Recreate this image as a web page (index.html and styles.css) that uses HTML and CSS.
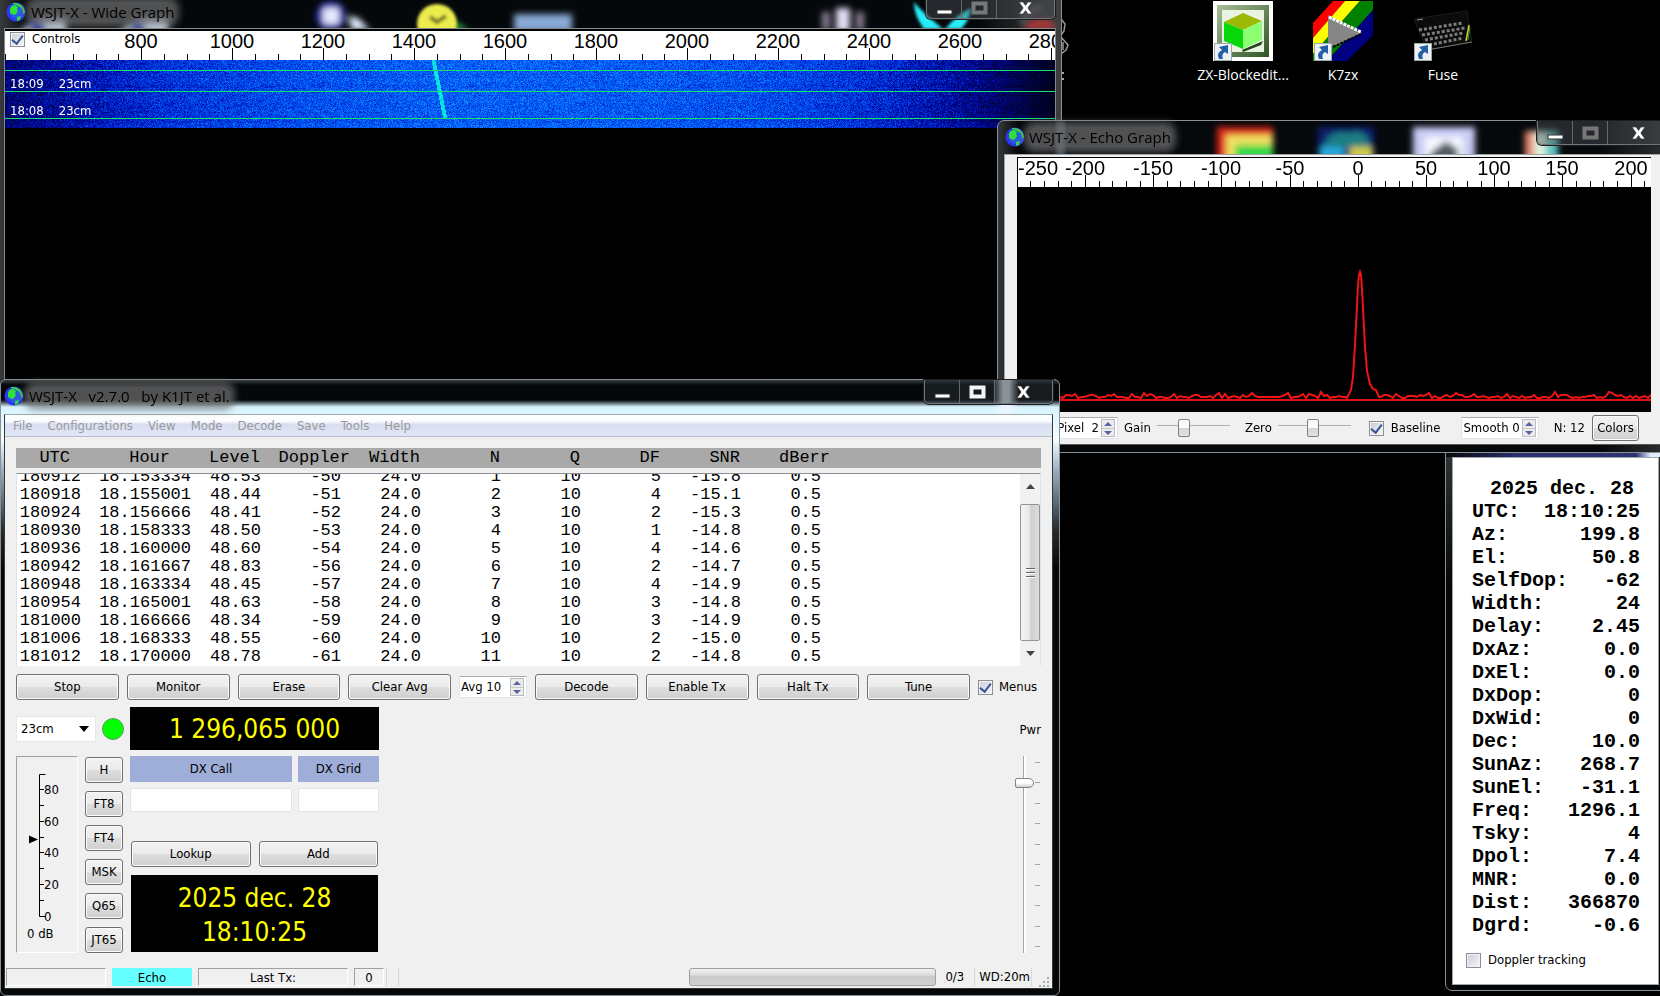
FILE: index.html
```
<!DOCTYPE html>
<html lang="en">
<head>
<meta charset="utf-8">
<title>WSJT-X v2.7.0</title>
<link rel="stylesheet" href="styles.css">
</head>
<body>
<svg class="defs" aria-hidden="true">
  <defs>
    <filter id="soft" x="-20%" y="-50%" width="140%" height="200%"><feGaussianBlur stdDeviation="3"/></filter>
    <filter id="softer" x="-20%" y="-50%" width="140%" height="200%"><feGaussianBlur stdDeviation="1.500"/></filter>
    <symbol id="globe" viewBox="0 0 20 20">
      <circle cx="10" cy="10" r="9.5" fill="#2f35f0"/>
      <circle cx="11" cy="10" r="7" fill="#2a5ae6"/>
      <path d="M4 7Q5 3 9 3L12 5L11 7L12 9L10 12L8 13L4 11Z" fill="#2de336"/>
      <path d="M7 1Q17 0 19 10L17.500 12Q17 4 7 2ZM11 15L15 14L14 18L11 19Z" fill="#35dd3b"/>
    </symbol>
    <symbol id="min" viewBox="0 0 17 14"><rect x="1" y="9" width="15" height="4" fill="#fff" stroke="#333" stroke-width="1"/></symbol>
    <symbol id="max" viewBox="0 0 17 14"><rect x="2.5" y="2.5" width="12" height="9" fill="none" stroke="currentColor" stroke-width="4"/></symbol>
    <symbol id="close" viewBox="0 0 17 14"><path d="M2 1H6L8.500 4.500L11 1H15L10.800 7L15 13H11L8.500 9.500L6 13H2L6.200 7Z" fill="#fff" stroke="#333" stroke-width=".6"/></symbol>
    <symbol id="shortcut" viewBox="0 0 18 18">
      <rect x=".5" y=".5" width="17" height="17" fill="#eef1f5" stroke="#9aa"/>
      <path d="M5 16Q2 10 8 7L5 4L14 2L14 11L11 9Q7 11 9 16Z" fill="#255fa8"/>
    </symbol>
  </defs>
</svg>

<main class="desktop">
  <div class="shortcuts">
    <a class="shortcut" href="#zx">
      <svg width="60" height="60" viewBox="0 0 60 60">
        <defs><linearGradient id="frame" x2="1" y2="1"><stop stop-color="#a9bf98"/><stop offset="1" stop-color="#2e5522"/></linearGradient></defs>
        <rect width="60" height="60" fill="#fff"/><rect x="4" y="4" width="52" height="52" fill="url(#frame)"/>
        <rect x="9" y="9" width="42" height="42" fill="#e9f3e2"/>
        <path d="M29 49L50 40L48 44L30 51Z" fill="#24401c"/>
        <path d="M11 21L30 12L49 20L30 29Z" fill="#9db805"/><path d="M11 21L30 29V48L11 40Z" fill="#08d70c"/><path d="M49 20L30 29V48L49 39Z" fill="#8dff72"/>
        <use href="#shortcut" x="1" y="42" width="18" height="18"/>
      </svg>
      <span>ZX-Blockedit...</span>
    </a>
    <a class="shortcut" href="#k7zx">
      <svg width="60" height="60" viewBox="0 0 60 60">
        <path d="M0 22L20 0H32L0 37Z" fill="#f00"/><path d="M32 0H47L0 53V37Z" fill="#ff0"/><path d="M47 0H60V9L14 60H0V53Z" fill="#008000"/><path d="M60 9V34L34 60H14Z" fill="#000080"/>
        <path d="M15 14L49 32L15 48Z" fill="#858585"/><path d="M16 16L48 31" stroke="#fff" stroke-width="3" stroke-dasharray="3 1"/><path d="M20 46L48 33" stroke="#000" stroke-width="2" stroke-dasharray="3 1"/>
        <use href="#shortcut" x="1" y="42" width="18" height="18"/>
      </svg>
      <span>K7zx</span>
    </a>
    <a class="shortcut" href="#fuse">
      <svg width="60" height="60" viewBox="0 0 60 60">
        <path d="M1 18L54 10L59 41L14 49Z" fill="#0b0b0b" stroke="#1c1c1c"/>
        <path d="M4 19L10 18" stroke="#999"/>
        <g fill="none" stroke="#7d7d7d" stroke-width="3" stroke-dasharray="3 2"><path d="M6 29L50 22"/><path d="M9 34L52 27"/><path d="M12 39L50 32"/><path d="M16 44L50 37"/></g>
        <path d="M56 24L53 40" stroke="#d7c92f" stroke-width="1.500"/><path d="M57 26L55 39" stroke="#2e9c4a"/>
        <path d="M14 49L59 41" stroke="#777"/>
        <use href="#shortcut" x="1" y="42" width="18" height="18"/>
      </svg>
      <span>Fuse</span>
    </a>
  </div>

  <svg class="hidden-shortcut" width="12" height="84" viewBox="0 0 12 84" aria-hidden="true"><path d="M1 19L5 24L4 31L1 35M1 37L8 45L6 50L1 54M3 42V50" fill="none" stroke="#999" stroke-width="1.500"/><path d="M3 72V74M3 78V80" stroke="#ddd" stroke-width="1.500"/></svg>

  <section class="window wide-window">
    <svg class="backdrop" width="1060" height="28" aria-hidden="true">
      <g filter="url(#soft)">
        <path d="M18 32L40 18H66V32ZM118 32L138 18H168V32Z" fill="#dcecff"/><rect x="30" y="20" width="15" height="12" fill="#2544b8"/><rect x="131" y="20" width="14" height="12" fill="#2544b8"/>
      </g>
      <g filter="url(#soft)">
        <circle cx="331" cy="16" r="15" fill="#2a2fa8"/><rect x="323" y="8" width="16" height="16" fill="#e6e9ff"/><path d="M348 16L358 18L370 30H352Z" fill="#e3efff"/>
        <path d="M455 22L469 30H455Z" fill="#28d24c"/>
        <rect x="514" y="14" width="58" height="18" fill="#87a9d4"/>
        <path d="M822 12H830V30H822ZM856 12H864V30H856Z" fill="#8c7f96"/><rect x="836" y="8" width="14" height="24" fill="#e3dcf4"/>
        <path d="M1024 30Q1026 18 1042 18Q1056 20 1056 30Z" fill="#a83838"/><path d="M1022 24Q1026 8 1042 8" stroke="#888" stroke-width="3" fill="none"/>
      </g>
      <g filter="url(#softer)">
        <circle cx="437" cy="24" r="20" fill="#ecec4e"/><path d="M430 17L437 22L446 16" fill="none" stroke="#7c7a21" stroke-width="4"/>
        <path d="M914 2Q922 12 943 29H924Q914 16 914 2ZM971 8Q958 14 945 29H961Q970 20 971 8Z" fill="#25eefa"/>
      </g>
    </svg>
    <header class="titlebar">
      <svg class="globe"><use href="#globe"/></svg><h2 class="title">WSJT-X - Wide Graph</h2>
      <div class="caption"><button aria-label="Minimize"><svg><use href="#min"/></svg></button><button class="dim" aria-label="Maximize"><svg><use href="#max"/></svg></button><button class="wide" aria-label="Close"><svg><use href="#close"/></svg></button></div>
    </header>
    <div class="wide-body">
      <div class="wide-scale">
        <svg id="wide-axis" class="axis"></svg>
        <label class="check controls"><input type="checkbox" checked>Controls</label>
      </div>
      <div class="waterfall">
        <canvas id="waterfall" width="1050" height="68"></canvas>
        <div class="stamp stamp-a"><span>18:09</span><span>23cm</span></div>
        <div class="stamp stamp-b"><span>18:08</span><span>23cm</span></div>
      </div>
    </div>
  </section>

  <section class="window astro-window">
    <div class="astro-body">
      <table class="astro">
        <caption>2025 dec. 28</caption>
        <tbody>
          <tr><th>UTC:</th><td>18:10:25</td></tr><tr><th>Az:</th><td>199.8</td></tr><tr><th>El:</th><td>50.8</td></tr>
          <tr><th>SelfDop:</th><td>-62</td></tr><tr><th>Width:</th><td>24</td></tr><tr><th>Delay:</th><td>2.45</td></tr>
          <tr><th>DxAz:</th><td>0.0</td></tr><tr><th>DxEl:</th><td>0.0</td></tr><tr><th>DxDop:</th><td>0</td></tr><tr><th>DxWid:</th><td>0</td></tr>
          <tr><th>Dec:</th><td>10.0</td></tr><tr><th>SunAz:</th><td>268.7</td></tr><tr><th>SunEl:</th><td>-31.1</td></tr><tr><th>Freq:</th><td>1296.1</td></tr>
          <tr><th>Tsky:</th><td>4</td></tr><tr><th>Dpol:</th><td>7.4</td></tr><tr><th>MNR:</th><td>0.0</td></tr><tr><th>Dist:</th><td>366870</td></tr><tr><th>Dgrd:</th><td>-0.6</td></tr>
        </tbody>
      </table>
      <label class="check"><input type="checkbox">Doppler tracking</label>
    </div>
  </section>

  <section class="window echo-window">
    <svg class="backdrop" width="663" height="34" aria-hidden="true">
      <g filter="url(#soft)">
        <rect x="219" y="6" width="56" height="36" fill="#e0281c"/><rect x="228" y="14" width="47" height="28" fill="#f0e060"/><rect x="237" y="24" width="38" height="20" fill="#35d84a"/>
        <rect x="320" y="6" width="56" height="36" fill="#0c1f6e"/><path d="M326 26Q330 8 350 12Q368 6 372 24V26Z" fill="#1d7e82"/><rect x="322" y="26" width="24" height="16" fill="#25a8dd"/><rect x="352" y="26" width="22" height="16" fill="#d3cc4a"/>
        <rect x="415" y="6" width="62" height="40" fill="#c9ccf4"/><rect x="427" y="16" width="38" height="30" fill="#f6f9ff"/><path d="M432 32L448 20L460 28V40H432Z" fill="#555b66"/>
        <rect x="527" y="10" width="9" height="32" fill="#e88a78"/><rect x="536" y="10" width="12" height="32" fill="#dcefd9"/><rect x="548" y="10" width="12" height="32" fill="#5ec5c4"/>
      </g>
      <rect x="59" y="0" width="7" height="36" fill="#9db0c8" opacity=".6" filter="url(#soft)"/>
    </svg>
    <header class="titlebar">
      <svg class="globe"><use href="#globe"/></svg><h2 class="title">WSJT-X - Echo Graph</h2>
      <div class="caption"><button aria-label="Minimize"><svg><use href="#min"/></svg></button><button class="dim" aria-label="Maximize"><svg><use href="#max"/></svg></button><button class="wide" aria-label="Close"><svg><use href="#close"/></svg></button></div>
    </header>
    <div class="echo-body">
      <div class="echo-plot">
        <svg id="echo-axis" class="axis"></svg>
        <svg id="echo-trace" class="trace"></svg>
      </div>
      <div class="echo-tools">
        <div class="spin bins"><input aria-label="Bins per pixel" value="Bins/Pixel  2"><span class="steps"><button aria-label="More bins"></button><button aria-label="Fewer bins"></button></span></div>
        <label class="slide gain">Gain <input type="range" value="34"></label>
        <label class="slide zero">Zero <input type="range" value="48"></label>
        <label class="check baseline"><input type="checkbox" checked>Baseline</label>
        <div class="spin smooth"><input aria-label="Smooth" value="Smooth 0"><span class="steps"><button aria-label="Smoother"></button><button aria-label="Less smooth"></button></span></div>
        <span class="count">N: 12</span>
        <button class="btn colors">Colors</button>
      </div>
    </div>
  </section>

  <section class="window main-window">
    <header class="titlebar">
      <svg class="globe"><use href="#globe"/></svg><h1 class="title">WSJT-X &nbsp; v2.7.0 &nbsp; by K1JT et al.</h1>
      <div class="caption"><button aria-label="Minimize"><svg><use href="#min"/></svg></button><button aria-label="Maximize"><svg><use href="#max"/></svg></button><button class="wide" aria-label="Close"><svg><use href="#close"/></svg></button></div>
    </header>
    <div class="main-body">
      <nav class="menu"><a href="#file">File</a><a href="#configurations">Configurations</a><a href="#view">View</a><a href="#mode">Mode</a><a href="#decode">Decode</a><a href="#save">Save</a><a href="#tools">Tools</a><a href="#help">Help</a></nav>
      <div class="content">
        <table class="echoes echo-head">
          <colgroup><col class="c70"><col class="c100"><col class="c90"><col class="c90"><col class="c70"><col class="c80"><col class="c80"><col class="c80"><col class="c80"><col class="c90"></colgroup>
          <thead><tr><th>UTC</th><th>Hour</th><th>Level</th><th>Doppler</th><th>Width</th><th>N</th><th>Q</th><th>DF</th><th>SNR</th><th>dBerr</th></tr></thead>
        </table>
        <div class="log">
          <div class="log-view">
            <table class="echoes">
              <colgroup><col class="c80"><col class="c110"><col class="c70"><col class="c80"><col class="c80"><col class="c80"><col class="c80"><col class="c80"><col class="c80"><col class="c80"></colgroup>
              <tbody>
                <tr><td>180912<td>18.153334<td>48.53<td>-50<td>24.0<td>1<td>10<td>5<td>-15.8<td>0.5</tr>
                <tr><td>180918<td>18.155001<td>48.44<td>-51<td>24.0<td>2<td>10<td>4<td>-15.1<td>0.5</tr>
                <tr><td>180924<td>18.156666<td>48.41<td>-52<td>24.0<td>3<td>10<td>2<td>-15.3<td>0.5</tr>
                <tr><td>180930<td>18.158333<td>48.50<td>-53<td>24.0<td>4<td>10<td>1<td>-14.8<td>0.5</tr>
                <tr><td>180936<td>18.160000<td>48.60<td>-54<td>24.0<td>5<td>10<td>4<td>-14.6<td>0.5</tr>
                <tr><td>180942<td>18.161667<td>48.83<td>-56<td>24.0<td>6<td>10<td>2<td>-14.7<td>0.5</tr>
                <tr><td>180948<td>18.163334<td>48.45<td>-57<td>24.0<td>7<td>10<td>4<td>-14.9<td>0.5</tr>
                <tr><td>180954<td>18.165001<td>48.63<td>-58<td>24.0<td>8<td>10<td>3<td>-14.8<td>0.5</tr>
                <tr><td>181000<td>18.166666<td>48.34<td>-59<td>24.0<td>9<td>10<td>3<td>-14.9<td>0.5</tr>
                <tr><td>181006<td>18.168333<td>48.55<td>-60<td>24.0<td>10<td>10<td>2<td>-15.0<td>0.5</tr>
                <tr><td>181012<td>18.170000<td>48.78<td>-61<td>24.0<td>11<td>10<td>2<td>-14.8<td>0.5</tr>
              </tbody>
            </table>
          </div>
          <div class="scroll">
            <button aria-label="Scroll up"><svg width="9" height="5" viewBox="0 0 9 5"><path d="M0 5L4.500 0L9 5Z" fill="#444"/></svg></button>
            <div class="thumb"><i></i><i></i><i></i></div>
            <button aria-label="Scroll down"><svg width="9" height="5" viewBox="0 0 9 5"><path d="M0 0L4.500 5L9 0Z" fill="#444"/></svg></button>
          </div>
        </div>
        <div class="actions">
          <button class="btn">Stop</button><button class="btn">Monitor</button><button class="btn">Erase</button><button class="btn">Clear Avg</button>
          <div class="spin avg"><input aria-label="Average" value="Avg 10"><span class="steps"><button aria-label="Increase average"></button><button aria-label="Decrease average"></button></span></div>
          <button class="btn">Decode</button><button class="btn">Enable Tx</button><button class="btn">Halt Tx</button><button class="btn">Tune</button>
          <label class="check menus"><input type="checkbox" checked>Menus</label>
        </div>
        <div class="lower">
          <div class="station">
            <div class="band-row">
              <div class="band"><select aria-label="Band"><option>23cm</option></select><svg width="10" height="6" viewBox="0 0 10 6"><path d="M0 0H10L5 6Z"/></svg></div>
              <span class="lamp"></span>
              <output class="freq">1 296,065 000</output>
            </div>
            <div class="station-row">
              <div class="meter">
                <svg width="60" height="195" viewBox="0 0 60 195">
                  <path d="M28.500 17.500H22.500V159.500H28.500M22.500 32.500H27M22.500 48.500H27M22.500 64.500H27M22.500 80.500H27M22.500 95.500H27M22.500 111.500H27M22.500 127.500H27M22.500 143.500H27" fill="none" stroke="#000"/>
                  <path d="M12 78.500L21 82.500L12 86.500Z"/>
                  <g><text x="27" y="37">80</text><text x="27" y="69">60</text><text x="27" y="100">40</text><text x="27" y="132">20</text><text x="27" y="164">0</text><text x="10" y="181">0 dB</text></g>
                </svg>
              </div>
              <div class="modes"><button class="btn">H</button><button class="btn">FT8</button><button class="btn">FT4</button><button class="btn">MSK</button><button class="btn">Q65</button><button class="btn">JT65</button></div>
              <div class="dx">
                <div class="dx-fields">
                  <label for="call">DX Call</label><label for="grid">DX Grid</label>
                  <input id="call"><input id="grid">
                </div>
                <div class="dx-buttons"><button class="btn">Lookup</button><button class="btn">Add</button></div>
                <div class="clock"><span>2025 dec. 28</span><span>18:10:25</span></div>
              </div>
            </div>
          </div>
          <div class="power">
            <label for="pwr">Pwr</label>
            <div class="power-scale"><input id="pwr" type="range" value="88"><div class="power-ticks"><i></i><i></i><i></i><i></i><i></i><i></i><i></i><i></i><i></i><i></i></div></div>
          </div>
        </div>
      </div>
      <footer class="status">
        <span class="cell cell-a"></span><span class="cell-echo">Echo</span><span class="cell cell-tx">Last Tx:</span><span class="cell cell-n">0</span><span class="rule"></span>
        <div class="progress" role="progressbar" aria-label="Sequence"></div><span class="seq">0/3</span><span class="dog">WD:20m</span>
        <svg class="grip" width="11" height="11" viewBox="0 0 11 11"><path d="M0 9H2V11H0ZM4 9H6V11H4ZM8 9H10V11H8ZM4 5H6V7H4ZM8 5H10V7H8ZM8 1H10V3H8Z" fill="#aaa"/></svg>
      </footer>
    </div>
  </section>
</main>
<script src="app.js"></script>
</body>
</html>
```
FILE: styles.css
```
* { box-sizing: border-box; }
body { margin: 0; background: #000; color: #000; font: 13px/16px "DejaVu Sans Condensed", "DejaVu Sans", sans-serif; }
button, input, select { font: inherit; color: inherit; margin: 0; }
button { padding: 0; }
i { display: block; }
.defs { position: absolute; width: 0; height: 0; }
.desktop { position: relative; min-height: 100vh; overflow: hidden; background: #000; }

.shortcuts { position: absolute; left: 1193px; top: 1px; display: flex; }
.shortcut { width: 100px; display: flex; flex-direction: column; align-items: center; gap: 4px; color: #fff; text-decoration: none; font: 14px/20px "Open Sans", "Noto Sans", sans-serif; }
.shortcut svg { display: block; }
.hidden-shortcut { position: absolute; left: 1060px; top: 0; }

/* Window frames */
.window { position: absolute; display: flex; flex-direction: column; border: 1px solid #8b9092; background: #04080b; }
.backdrop { position: absolute; left: 0; top: 0; overflow: hidden; }
.titlebar { position: relative; display: flex; align-items: center; flex: none; }
.globe { width: 20px; height: 20px; flex: none; }
.title { margin: 0 auto 0 5px; font: 15px/20px "Open Sans", "Noto Sans", sans-serif; color: #000; background: rgba(112, 112, 112, .7); box-shadow: 0 0 7px 5px rgba(112, 112, 112, .7); border-radius: 6px; white-space: nowrap; }
.caption { align-self: flex-start; display: flex; border: 1px solid #70777b; border-top: 0; border-radius: 0 0 5px 5px; box-shadow: 0 0 0 1px #1b1f22; background: rgba(75, 80, 84, .45); overflow: hidden; }
.caption button { width: 35px; border: 0; border-right: 1px solid #62686c; background: none; color: #f4f4f4; display: grid; place-items: center; }
.caption .wide { width: 57px; border-right: 0; }
.caption .dim { color: #777; }
.caption svg { width: 17px; height: 14px; }

.wide-window { left: -3px; top: -1px; width: 1065px; height: 400px; padding: 0 5px 0 6px; background: linear-gradient(90deg, #3c3f41, #04080b 30px, #04080b 980px, #3c4043); }
.wide-window .backdrop { left: 2px; }
.wide-window .titlebar { height: 28px; padding: 0 1px 0 2px; align-items: flex-start; }
.wide-window .globe { margin-top: 2px; }
.wide-window .title { margin-top: 2px; }
.wide-window .caption { height: 19px; }
.wide-window .caption button { padding-bottom: 3px; }
.wide-body { position: relative; flex: 1; border: 1px solid #85898b; border-bottom: 0; background: #000; }
.wide-scale { position: relative; height: 31px; background: #fff; border-top: 2px solid #000; overflow-x: clip; overflow-y: visible; }
.axis { display: block; width: 100%; height: 100%; overflow: visible; font: 20px "Liberation Sans", Arial, sans-serif; }
.controls { position: absolute; left: 5px; top: 0; background: #fff; }
.waterfall { position: relative; height: 68px; }
.waterfall canvas { display: block; width: 100%; height: 68px; }
.stamp { position: absolute; left: 5px; display: flex; gap: 15px; color: #fff; }
.stamp-a { top: 16px; }
.stamp-b { top: 43px; }

/* Controls */
.check { display: flex; align-items: center; gap: 7px; white-space: nowrap; }
.check input { appearance: none; width: 15px; height: 15px; flex: none; border: 1px solid #8b8e92; background: linear-gradient(135deg, #c9ced6, #f4f6f8); box-shadow: inset 0 0 0 1px #f4f4f4; }
.check input:checked::after { content: ""; display: block; width: 5px; height: 9px; margin: 0 auto; border: solid #3a5296; border-width: 0 2px 2px 0; transform: rotate(38deg); }
.btn { height: 26px; border: 1px solid #707070; border-radius: 3px; box-shadow: inset 0 0 0 1px #fbfbfb; background: linear-gradient(#f2f2f2, #ebebeb 48%, #dddddd 52%, #cfcfcf); white-space: nowrap; }
.spin { display: flex; align-items: center; height: 22px; padding-right: 2px; background: #fff; border: 1px solid #e2e3ea; border-top-color: #abadb3; }
.spin input { width: 100%; min-width: 0; border: 0; padding: 0 2px 0 0; background: none; outline: 0; white-space: pre; text-align: right; }
.steps { display: flex; flex-direction: column; flex: none; border: 1px solid #b9bbc0; }
.steps button { width: 12px; height: 8px; border: 0; background: #ececec; display: grid; place-items: center; }
.steps button::after { content: ""; border: 4px solid transparent; border-top: 0; border-bottom: 4px solid #5a62a0; }
.steps button + button { border-top: 1px solid #c8c8c8; }
.steps button + button::after { border-top: 4px solid #5a62a0; border-bottom: 0; }
.slide { display: flex; align-items: center; gap: 6px; }
.slide input { appearance: none; width: 73px; height: 20px; background: linear-gradient(#aeb0b3, #aeb0b3) center 7px / 100% 1px no-repeat; }
.slide input::-webkit-slider-thumb { appearance: none; width: 12px; height: 18px; border: 1px solid #7d8083; border-radius: 2px; background: linear-gradient(#fafafa 48%, #d5d5d5 52%, #e2e2e2); }

/* Echo graph */
.echo-window { left: 997px; right: -8px; top: 120px; height: 333px; padding: 0 0 8px 6px; border-radius: 7px 0 0 0; background: linear-gradient(90deg, #33393c, #06090c 20px, #06090c 600px, #2c3033); }
.echo-window .titlebar { height: 33px; padding: 0 0 2px 1px; }
.echo-window .title { margin-left: 4px; }
.echo-window .caption { height: 24px; margin-right: -2px; }
.echo-window .caption .wide { width: 60px; }
.echo-body { position: relative; flex: 1; display: flex; flex-direction: column; border: 1px solid #9fa4a7; border-bottom-color: #555; background: #f0f0f0; padding: 2px 15px 0 12px; }
.echo-plot { flex: none; border-top: 1px solid #000; border-left: 1px solid #000; background: #000; overflow-x: clip; overflow-y: visible; }
.echo-plot .axis { height: 29px; background: #fff; }
.trace { display: block; width: 100%; height: 225px; }
.echo-tools { display: flex; align-items: center; height: 32px; padding-left: 4px; white-space: nowrap; }
.bins { width: 97px; }
.gain { margin-left: 6px; }
.zero { margin-left: 15px; }
.baseline { margin-left: 18px; }
.smooth { width: 78px; margin-left: auto; }
.count { margin: 0 7px 0 15px; }
.colors { width: 47px; margin-right: 12px; }

/* Astronomical data */
.astro-window { left: 1445px; right: -8px; top: 440px; bottom: 5px; padding: 16px 8px 5px 6px; border-radius: 0 0 0 7px; background: linear-gradient(90deg, #05070a, #2c3174 75px, #2c3174 190px, #dfefff 205px) top / 100% 16px no-repeat, linear-gradient(#34383a, #050708 140px); }
.astro-body { flex: 1; border: 1px solid #9fa4a7; background: #fff; padding: 19px 18px 0 13px; }
.astro, .astro tbody, .astro caption { display: block; }
.astro { font: bold 20px/23px "Liberation Mono", "Courier New", monospace; }
.astro caption { text-align: right; padding-right: 6px; white-space: nowrap; }
.astro tr { display: flex; justify-content: space-between; white-space: nowrap; }
.astro th { width: 0; margin-left: 6px; padding: 0; text-align: left; }
.astro td { padding: 0; text-align: right; }
.astro-body .check { margin-top: 15px; }

/* Main window */
.main-window { left: 0; top: 379px; width: 1060px; bottom: 0; padding: 0 6px 6px 3px; border-radius: 6px; background: linear-gradient(90deg, transparent 992px, #eaf6ff 1002px, #eaf6ff 1008px, transparent 1018px) top / 100% 34px no-repeat, linear-gradient(#3a3f42, #04080b 5px, #04080b 20px, #d8f4ff 27px, #f6fdff 60px, #9bb0c4 90px, #262b2e 150px, #050708 190px); }
.main-window .titlebar { height: 34px; align-items: flex-start; }
.main-window .globe { margin-top: 6px; }
.main-window .title { margin-top: 7px; line-height: 18px; }
.main-window .caption { height: 24px; background: rgba(40, 46, 50, .5); }
.main-body { flex: 1; display: flex; flex-direction: column; border: 1px solid #30383c; border-top-color: #9aa; background: #f0f0f0; }
.menu { display: flex; align-items: center; gap: 15px; height: 22px; padding: 1px 0 0 8px; color: #999; background: linear-gradient(#fff, #fafbff 30%, #d8def0 45%, #e2e7f7); border-bottom: 1px solid #b6bccc; }
.menu a { color: inherit; text-decoration: none; }
.content { flex: 1; display: flex; flex-direction: column; padding: 11px 11px 0; }
.echoes { border-collapse: collapse; table-layout: fixed; width: 804px; font: 17px/18px "Liberation Mono", "Courier New", monospace; }
.echoes th, .echoes td { padding: 0; text-align: right; font-weight: normal; white-space: nowrap; }
.echo-head { display: block; width: 100%; height: 20px; background: #a9a9a9; padding: 1px 0; }
.c70 { width: 70px; } .c80 { width: 80px; } .c90 { width: 90px; } .c100 { width: 100px; } .c110 { width: 110px; }
.echoes col:first-child { width: 64px; }
.echo-head col:first-child { width: 54px; }
.log { display: flex; height: 193px; margin-top: 5px; background: #fff; border: 1px solid #e2e3ea; border-top-color: #8e8f94; border-bottom: 0; }
.log-view { flex: 1; display: flex; flex-direction: column; justify-content: flex-end; overflow: hidden; }
.log-view .echoes { flex: none; }
.scroll { width: 20px; display: flex; flex-direction: column; align-items: stretch; background: #f1f1f1; }
.scroll button { height: 24px; border: 0; background: none; display: grid; place-items: center; }
.scroll .thumb { height: 137px; margin-top: 6px; border: 1px solid #949494; border-radius: 2px; background: linear-gradient(90deg, #f5f5f5, #e9e9eb 45%, #cfcfcf 55%, #dcdcdc); display: flex; flex-direction: column; align-items: center; justify-content: center; gap: 2px; }
.thumb i { width: 9px; height: 2px; background: #666; border-bottom: 1px solid #fff; }
.actions { display: flex; align-items: center; gap: 8px; margin-top: 8px; }
.actions .btn { flex: 1; }
.avg { width: 68px; }
.avg input { text-align: left; padding: 0 0 0 1px; }
.menus { width: 63px; gap: 6px; }
.lower { display: flex; justify-content: space-between; margin-top: 7px; }
.station { width: 363px; display: flex; flex-direction: column; gap: 6px; }
.band-row { display: flex; align-items: center; gap: 6px; }
.band { width: 80px; height: 26px; display: grid; align-items: center; background: #fff; border: 1px solid #e6e6e6; }
.band select, .band svg { grid-area: 1 / 1; }
.band select { appearance: none; width: 100%; border: 0; background: none; padding: 0 4px; }
.band svg { justify-self: end; margin-right: 6px; pointer-events: none; }
.lamp { width: 22px; height: 22px; border-radius: 50%; background: #0f0; border: 1px solid #5b9c5b; }
.freq { flex: 1; height: 43px; background: #000; color: #ff0; font-size: 26px; line-height: 44px; text-align: center; }
.station-row { display: flex; gap: 7px; }
.meter { width: 62px; border: 1px solid #fff; border-top-color: #a0a0a0; border-left-color: #a0a0a0; }
.meter svg { display: block; }
.modes { width: 38px; display: flex; flex-direction: column; gap: 8px; padding-top: 1px; }
.dx { flex: 1; display: flex; flex-direction: column; }
.dx-fields { display: grid; grid-template-columns: 2fr 1fr; gap: 6px; }
.dx-fields label { background: #9faed8; line-height: 26px; text-align: center; }
.dx-fields input { width: 100%; min-width: 0; height: 24px; border: 1px solid #e2e3ea; border-radius: 2px; background: #fff; }
.dx-buttons { display: flex; gap: 8px; margin: 29px 1px 8px; }
.dx-buttons .btn { flex: 1; }
.clock { display: flex; flex-direction: column; margin: 0 1px; padding: 6px 0 3px; background: #000; color: #ff0; text-align: center; font-size: 26px; line-height: 34px; }
.power { display: flex; flex-direction: column; align-items: flex-end; gap: 18px; padding-top: 15px; }
.power-scale { display: flex; gap: 1px; height: 197px; padding-right: 1px; }
.power-scale input { appearance: none; writing-mode: vertical-lr; direction: rtl; width: 19px; height: 197px; background: linear-gradient(90deg, #a5a5a5 1px, #fff 1px) 8px center / 3px 100% no-repeat; }
.power-scale input::-webkit-slider-thumb { appearance: none; width: 19px; height: 10px; background: linear-gradient(#fff 50%, #ccc); border: 1px solid #858585; border-radius: 2px 5px 5px 2px; }
.power-ticks { display: flex; flex-direction: column; justify-content: space-between; padding: 6px 0; }
.power-ticks i { width: 5px; height: 1px; background: #a5a5a5; }
.status { display: flex; align-items: center; height: 20px; margin-bottom: 1px; padding: 0 2px 0 1px; }
.cell { height: 18px; line-height: 17px; text-align: center; border: 1px solid #fff; border-top-color: #a0a0a0; border-left-color: #a0a0a0; }
.cell-a { width: 100px; }
.cell-echo { width: 80px; height: 18px; margin: 0 6px; background: #6ff; line-height: 19px; text-align: center; }
.cell-tx { width: 150px; margin-right: 6px; }
.cell-n { width: 30px; }
.rule { width: 13px; height: 18px; margin-left: 2px; border: solid #d7d7d7; border-width: 0 1px; }
.progress { width: 247px; height: 18px; margin-left: auto; border: 1px solid #a0a0a0; border-radius: 3px; background: linear-gradient(#f2f2f2, #dedede 35%, #c9c9c9 50%, #d2d2d2); }
.seq { margin: 0 10px 0 9px; }
.dog { height: 18px; padding: 0 1px 0 4px; border: solid #d7d7d7; border-width: 0 1px; line-height: 18px; }
.grip { align-self: flex-end; margin-left: 7px; }
```
FILE: app.js
```
const NS = "http://www.w3.org/2000/svg";

let seed = 20251228;
function random() {
  seed = (seed * 1664525 + 1013904223) >>> 0;
  return seed / 4294967296;
}

function add(parent, name, attributes, text) {
  const node = document.createElementNS(NS, name);
  for (const key in attributes) node.setAttribute(key, attributes[key]);
  if (text !== undefined) node.textContent = text;
  parent.appendChild(node);
}

// Draws a frequency scale: `origin` is where the value `first` falls.
function drawAxis(id, options) {
  const svg = document.getElementById(id);
  const { origin, pitch, parts, first, step, count, height, baseline } = options;
  for (let i = -parts; i <= count * parts + 1; i++) {
    const x = Math.round(origin + (i * pitch) / parts);
    const long = i % parts === 0;
    if (x < 0) continue;
    add(svg, "rect", { x, y: height - (long ? 12 : 6), width: 1, height: long ? 12 : 6 });
  }
  for (let i = 0; i <= count; i++) {
    const value = first + i * step;
    if (value < options.from) continue;
    const x = Math.round(origin + i * pitch);
    add(svg, "text", { x, y: baseline, "text-anchor": "middle" }, value);
  }
}

drawAxis("wide-axis", { origin: 45, pitch: 91, parts: 4, first: 600, step: 200, count: 11, height: 29, baseline: 17, from: 800 });
drawAxis("echo-axis", { origin: 67, pitch: 68.2, parts: 5, first: -200, step: 50, count: 8, height: 29, baseline: 17, from: -200 });
add(document.getElementById("echo-axis"), "text", { x: 0, y: 17 }, "-250");

function interpolate(points, x) {
  for (let i = 1; i < points.length; i++) {
    const [x0, y0] = points[i - 1];
    const [x1, y1] = points[i];
    if (x <= x1) return y0 + ((y1 - y0) * (x - x0)) / (x1 - x0);
  }
  return points[points.length - 1][1];
}

const level = [[0, .2], [60, .3], [150, .46], [300, .57], [450, .63], [650, .61], [780, .55], [880, .43], [960, .27], [1010, .14], [1050, .05]];
const red = [[0, 0], [.6, 0], [.8, 20], [1, 70]];
const green = [[0, 0], [.3, 8], [.6, 86], [.8, 140], [1, 190]];
const blue = [[0, 0], [.25, 145], [.5, 228], [.7, 255], [1, 255]];

const canvas = document.getElementById("waterfall");
const context = canvas.getContext("2d");
const image = context.createImageData(canvas.width, canvas.height);
for (let y = 0; y < canvas.height; y++) {
  const row = (random() - .5) * .05;
  const centre = 428 + (y * 12) / 59;
  for (let x = 0; x < canvas.width; x++) {
    const base = interpolate(level, x);
    const value = Math.min(1, Math.max(0, base + (row + (random() + random() - 1) * .22) * Math.min(1, base * 4)));
    let pixel = [interpolate(red, value), interpolate(green, value), interpolate(blue, value)];
    if (y < 59 && Math.abs(x - centre) < 2) pixel = [10, 205 + random() * 40, 225];
    if (y === 10 || y === 31 || y === 58) pixel = [20, 225, 110];
    image.data.set([pixel[0], pixel[1], pixel[2], 255], (y * canvas.width + x) * 4);
  }
}
context.putImageData(image, 0, 0);

// Averaged echo spectrum above its baseline
const trace = document.getElementById("echo-trace");
const peak = [[329, 211], [333, 203], [335, 190], [337, 158], [340, 98], [341, 88], [342, 85], [343, 88], [344, 102], [347, 160], [349, 184], [352, 197], [355, 202], [358, 203], [361, 210]];
const points = [];
for (let x = 0; x < 639; x += 3) {
  if (x < 329 || x > 361) points.push(x + "," + (211 - Math.round(random() * random() * 6)));
  if (x === 327) for (const p of peak) points.push(p.join(","));
}
add(trace, "rect", { x: 0, y: 212, width: 640, height: 2, fill: "#e01010" });
add(trace, "polyline", { points: points.join(" "), fill: "none", stroke: "#f01414", "stroke-width": 2 });
```
